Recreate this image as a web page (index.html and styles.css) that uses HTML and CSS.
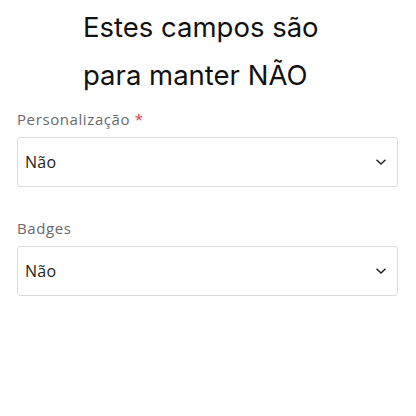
FILE: index.html
```html
<html>
<head>
<meta charset="UTF-8">
<meta name="viewport" content="width=device-width, initial-scale=1.0">
<title>Campos</title>
<link rel="stylesheet" href="styles.css">
</head>
<body>
    <div class="intro">
        <h2 class="intro-title">Estes campos são<br>para manter NÃO</h2>
    </div>
    <div class="form">
        <div class="field">
            <label class="field-label">Personalização <span class="req">*</span></label>
            <div class="select">
                <span class="select-value">Não</span>
                <svg class="chevron" viewBox="0 0 12 8" xmlns="http://www.w3.org/2000/svg">
                    <path d="M1.5 1.8 L6 6 L10.5 1.8" fill="none" stroke="#222" stroke-width="1.5"/>
                </svg>
            </div>
        </div>
        <div class="field">
            <label class="field-label">Badges</label>
            <div class="select">
                <span class="select-value">Não</span>
                <svg class="chevron" viewBox="0 0 12 8" xmlns="http://www.w3.org/2000/svg">
                    <path d="M1.5 1.8 L6 6 L10.5 1.8" fill="none" stroke="#222" stroke-width="1.5"/>
                </svg>
            </div>
        </div>
    </div>
</body>
</html>
```

FILE: styles.css
```css
body {
    margin: 0;
    background-color: #ffffff;
    color: #1a1a1a;
    font-family: "Open Sans", Arial, sans-serif;
}
.intro {
    padding: 3px 0 0 83px;
}
.intro-title {
    margin: 0;
    font-family: Inter, "Liberation Sans", sans-serif;
    font-weight: 400;
    font-size: 27.5px;
    line-height: 48px;
    color: #111;
}
.form {
    padding: 0 18px 0 17px;
}
.field {
    margin-top: 10px;
    margin-bottom: 31px;
}
.field-label {
    display: block;
    font-size: 15px;
    line-height: 20px;
    letter-spacing: 0.6px;
    color: #6a6a6a;
    margin-bottom: 8px;
}
.req {
    color: #d23a3a;
}
.select {
    display: flex;
    justify-content: space-between;
    align-items: center;
    height: 48px;
    padding: 0 10px 0 7px;
    border: 1px solid #dcdcdc;
    border-radius: 3px;
}
.select-value {
    font-size: 16px;
    letter-spacing: 0.3px;
    color: #222;
}
.chevron {
    width: 12px;
    height: 8px;
}
```
